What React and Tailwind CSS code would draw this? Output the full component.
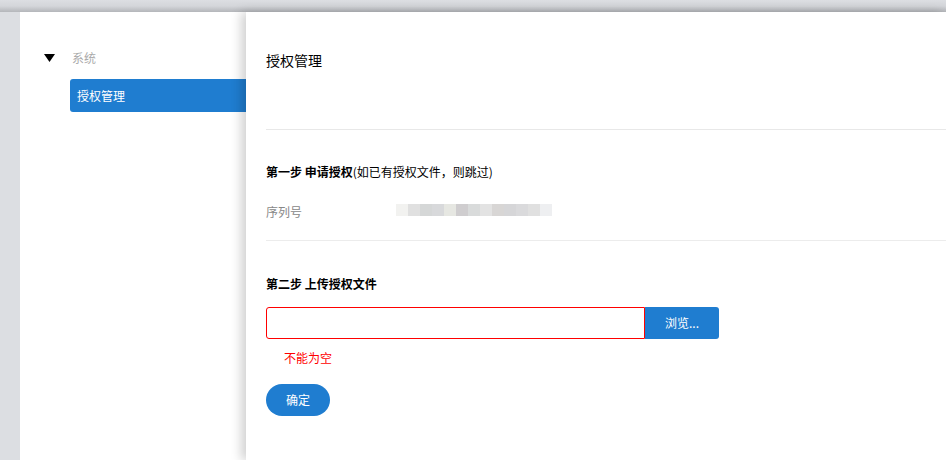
import React from 'react';

const FONT = { fontFamily: '"Noto Sans CJK SC", "Noto Sans", sans-serif' };

/* pixelated (mosaic) serial number */
const SERIAL_BLOCKS = [
  'bg-[#f2f2f0]', 'bg-[#e0e0e0]', 'bg-[#d5d7d7]', 'bg-[#d8d9db]', 'bg-[#e6e7e2]',
  'bg-[#cfcdcf]', 'bg-[#d9dbdb]', 'bg-[#e3e3e3]', 'bg-[#d8d6d5]', 'bg-[#d6d6d8]',
  'bg-[#dadadc]', 'bg-[#e0e0e0]', 'bg-[#eeeff1]',
];

const Sidebar = () => (
  <aside className="w-[226px] bg-white pt-[34px] shrink-0">
    <div className="flex items-center h-[24px] pl-[24px]">
      <svg width="11" height="8" viewBox="0 0 11 8" className="mr-[17px]">
        <polygon points="0,0 11,0 5.5,8" fill="#000" />
      </svg>
      <span className="text-[12px] text-[#aaaaaa]">系统</span>
    </div>
    <div className="mt-[9px] ml-[50px] h-[33px] rounded-l-[3px] bg-[#1f7dd0] flex items-center pl-[7px]">
      <span className="text-[12px] text-white">授权管理</span>
    </div>
  </aside>
);

const App = () => {
  return (
    <div style={FONT} className="w-[946px] h-[460px] bg-[#dcdee2] flex flex-col overflow-hidden">
      <div className="h-[12px] shrink-0 bg-gradient-to-b from-[#dcdee2] via-[#d4d6da] to-[#b4b6ba]" />
      <div className="flex flex-1 pl-[20px]">
        <Sidebar />
        <main className="flex-1 bg-white pl-[20px] shadow-[-5px_0_10px_rgba(0,0,0,0.18)] relative">
          <div className="h-[118px] pt-[38px] border-b border-[#e8e8e8]">
            <h1 className="text-[14px] leading-[20px] text-black">授权管理</h1>
          </div>

          <section className="pt-[32px] pb-[20px] border-b border-[#ececec]">
            <h2 className="text-[12px] leading-[20px] text-black">
              <span className="font-bold">第一步 申请授权</span>(如已有授权文件，则跳过)
            </h2>
            <div className="mt-[18px] flex items-center h-[20px]">
              <span className="w-[130px] text-[12px] text-[#888888] pt-[3px]">序列号</span>
              <div className="flex">
                {SERIAL_BLOCKS.map((c, i) => (
                  <div key={i} className={`w-[12px] h-[12px] ${c}`} />
                ))}
              </div>
            </div>
          </section>

          <section className="pt-[33px]">
            <h2 className="text-[12px] leading-[20px] font-bold text-black">第二步 上传授权文件</h2>
            <div className="mt-[13px] flex h-[32px]">
              <input
                type="text"
                className="w-[379px] h-[32px] border border-[#ff0000] rounded-l-[3px] outline-none px-2 text-[12px]"
              />
              <button className="w-[74px] h-[32px] bg-[#1f7dd0] text-white text-[12px] rounded-r-[3px]">
                浏览...
              </button>
            </div>
            <p className="mt-[9px] pl-[18px] text-[12px] leading-[20px] text-[#ff0000]">不能为空</p>
            <button className="mt-[16px] w-[64px] h-[32px] rounded-full bg-[#1f7dd0] text-white text-[12px]">
              确定
            </button>
          </section>
        </main>
      </div>
    </div>
  );
};

export default App;
